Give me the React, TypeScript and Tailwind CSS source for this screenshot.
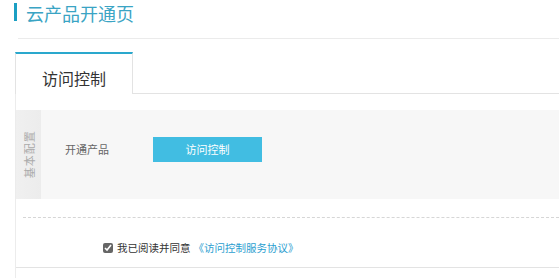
import React from "react";

export default function App() {
  const font = { fontFamily: '"Noto Sans CJK SC", "Noto Sans", sans-serif' };
  return (
    <div className="w-[559px] h-[278px] bg-white overflow-hidden" style={font}>
      {/* Header */}
      <div className="flex items-start pl-[14px] h-[28px]">
        <div className="mt-[3px] w-[3px] h-[18px] bg-[#1b9fc3]" />
        <div className="ml-[9px] text-[18px] leading-[27px] text-[#3aa4c4]">云产品开通页</div>
      </div>
      <div className="mt-[10px] ml-[18px] border-t border-[#ebebeb]" />
      {/* Tabs */}
      <div className="mt-[13px] pl-[15px] flex h-[42px]">
        <div className="w-[118px] h-[42px] pt-[8px] border-t-2 border-t-[#2aa8cd] border-x border-x-[#e3e3e3] bg-white flex items-center justify-center text-[16px] text-[#333]">
          访问控制
        </div>
        <div className="flex-1 border-b border-[#e3e3e3]" />
      </div>
      {/* Content */}
      <div className="ml-[15px] border-l border-[#ececec] pt-[16px] h-[200px]">
        <div className="h-[89px] bg-[#f7f7f7] flex">
          <div className="w-[25px] bg-gradient-to-r from-[#f0f0f0] to-[#ececec] flex items-center justify-center">
            <div className="-rotate-90 whitespace-nowrap text-[11px] text-[#aaa] tracking-[1px]">基本配置</div>
          </div>
          <div className="flex items-start pl-[24px] pt-[27px]">
            <div className="text-[11px] leading-[25px] text-[#666] w-[88px]">开通产品</div>
            <div className="w-[109px] h-[25px] bg-[#41bde2] flex items-center justify-center text-[11px] text-white">访问控制</div>
          </div>
        </div>
        <div className="mt-[18px] ml-[7px] border-t border-dashed border-[#d6d6d6]" />
        <div className="h-[49px] pt-[11px] flex items-center pl-[87px] text-[10.5px]">
          <input type="checkbox" defaultChecked className="w-[10px] h-[10px] mr-[4px] accent-[#666]" />
          <span className="text-[#333]">我已阅读并同意</span>
          <span className="ml-[3px] text-[#2b9ed0]">《访问控制服务协议》</span>
        </div>
        <div className="border-t border-[#e3e3e3]" />
      </div>
    </div>
  );
}
